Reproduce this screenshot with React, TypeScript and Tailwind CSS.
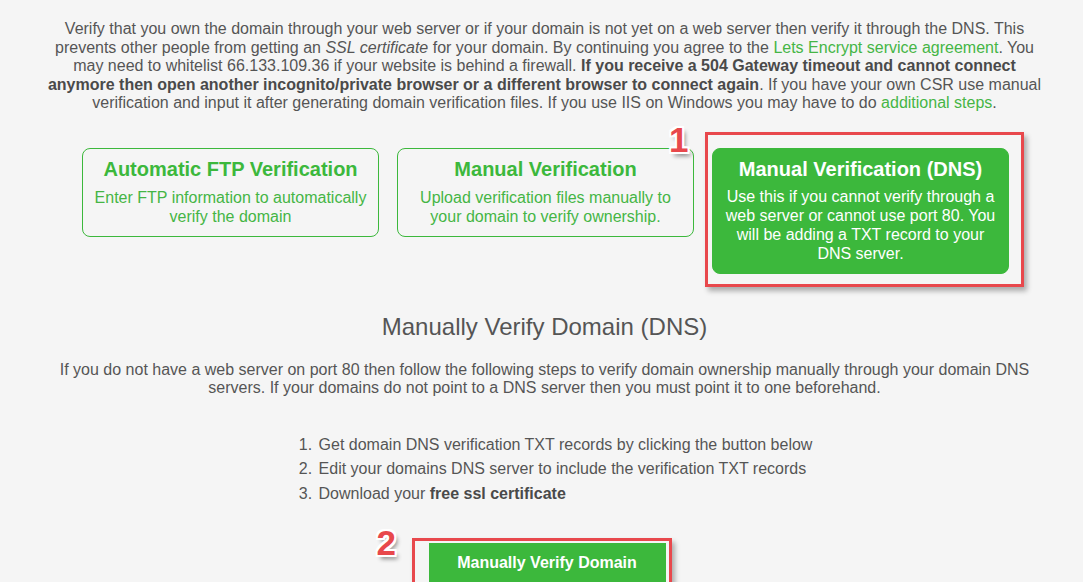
import React from "react";

function Badge({ n, className }: { n: string; className: string }) {
  return (
    <span
      className={`absolute text-[35px] leading-none font-bold text-[#e8484c] ${className}`}
      style={{
        textShadow:
          "-2px -2px 0 #fff, 2px -2px 0 #fff, -2px 2px 0 #fff, 2px 2px 0 #fff, 0 -2px 0 #fff, 0 2px 0 #fff, -2px 0 0 #fff, 2px 0 0 #fff, 3px 4px 4px rgba(0,0,0,0.45)",
      }}
    >
      {n}
    </span>
  );
}

export default function App() {
  return (
    <div
      className="min-h-screen bg-[#f5f5f5] text-[#555555] pl-[26px] pr-[20px] pt-[20px]"
      style={{ fontFamily: "'Liberation Sans', Arial, sans-serif" }}
    >
      <p className="text-[16px] leading-[18.5px] text-center whitespace-nowrap">
        Verify that you own the domain through your web server or if your domain is not yet on a web server then verify it through the DNS. This
        <br />
        prevents other people from getting an <i>SSL certificate</i> for your domain. By continuing you agree to the{" "}
        <a className="text-[#45b545]">Lets Encrypt service agreement</a>. You
        <br />
        may need to whitelist 66.133.109.36 if your website is behind a firewall.{" "}
        <b className="text-[#4a4a4a]">If you receive a 504 Gateway timeout and cannot connect</b>
        <br />
        <b className="text-[#4a4a4a]">anymore then open another incognito/private browser or a different browser to connect again</b>. If you have your own CSR use manual
        <br />
        verification and input it after generating domain verification files. If you use IIS on Windows you may have to do{" "}
        <a className="text-[#45b545]">additional steps</a>.
      </p>

      <div className="mt-[35px] flex justify-center items-start gap-[18px] pl-[2px]">
        <div className="w-[297px] border border-[#3cb83c] rounded-[8px] text-center text-[#3cb83c] pt-[8px] pb-[10px]">
          <div className="text-[20px] leading-[24px] font-bold mb-[7px]">Automatic FTP Verification</div>
          <div className="text-[16px] leading-[19px] text-[#45b545]">
            Enter FTP information to automatically
            <br />
            verify the domain
          </div>
        </div>
        <div className="w-[297px] border border-[#3cb83c] rounded-[8px] text-center text-[#3cb83c] pt-[8px] pb-[10px]">
          <div className="text-[20px] leading-[24px] font-bold mb-[7px]">Manual Verification</div>
          <div className="text-[16px] leading-[19px] text-[#45b545]">
            Upload verification files manually to
            <br />
            your domain to verify ownership.
          </div>
        </div>
        <div className="relative w-[297px]">
          <div className="absolute top-[-16px] left-[-7px] right-[-15px] bottom-[-13px] border-[3px] border-[#e8484c] shadow-[3px_4px_5px_rgba(0,0,0,0.3)]" />
          <Badge n="1" className="top-[-26px] left-[-43px]" />
          <div className="relative bg-[#3cb83c] rounded-[8px] text-center text-white pt-[8px] pb-[10px] border border-[#3cb83c]">
            <div className="text-[20px] leading-[24px] font-bold mb-[6px]">Manual Verification (DNS)</div>
            <div className="text-[16px] leading-[19px]">
              Use this if you cannot verify through a
              <br />
              web server or cannot use port 80. You
              <br />
              will be adding a TXT record to your
              <br />
              DNS server.
            </div>
          </div>
        </div>
      </div>

      <h2 className="mt-[39px] text-center text-[24px] leading-[28px] text-[#555555]">Manually Verify Domain (DNS)</h2>

      <p className="mt-[20px] text-[16px] leading-[18.5px] text-center whitespace-nowrap">
        If you do not have a web server on port 80 then follow the following steps to verify domain ownership manually through your domain DNS
        <br />
        servers. If your domains do not point to a DNS server then you must point it to one beforehand.
      </p>

      <div className="mt-[35px] text-center">
        <ol className="inline-block text-left list-decimal pl-[40px] text-[16px] leading-[24.5px]">
          <li className="pl-[2px]">Get domain DNS verification TXT records by clicking the button below</li>
          <li className="pl-[2px]">Edit your domains DNS server to include the verification TXT records</li>
          <li className="pl-[2px]">
            Download your <b className="text-[#4a4a4a]">free ssl certificate</b>
          </li>
        </ol>
      </div>

      <div className="mt-[37px] flex justify-center pl-[5px]">
        <div className="relative">
          <div className="absolute top-[-5px] left-[-17px] right-[-6px] bottom-[-6px] border-[3px] border-[#e8484c] shadow-[3px_4px_5px_rgba(0,0,0,0.3)]" />
          <Badge n="2" className="top-[-18px] left-[-52px]" />
          <button className="relative w-[237px] h-[40px] bg-[#3cb83c] text-white font-bold text-[16px]">
            Manually Verify Domain
          </button>
        </div>
      </div>
      <div className="h-[40px]" />
    </div>
  );
}
